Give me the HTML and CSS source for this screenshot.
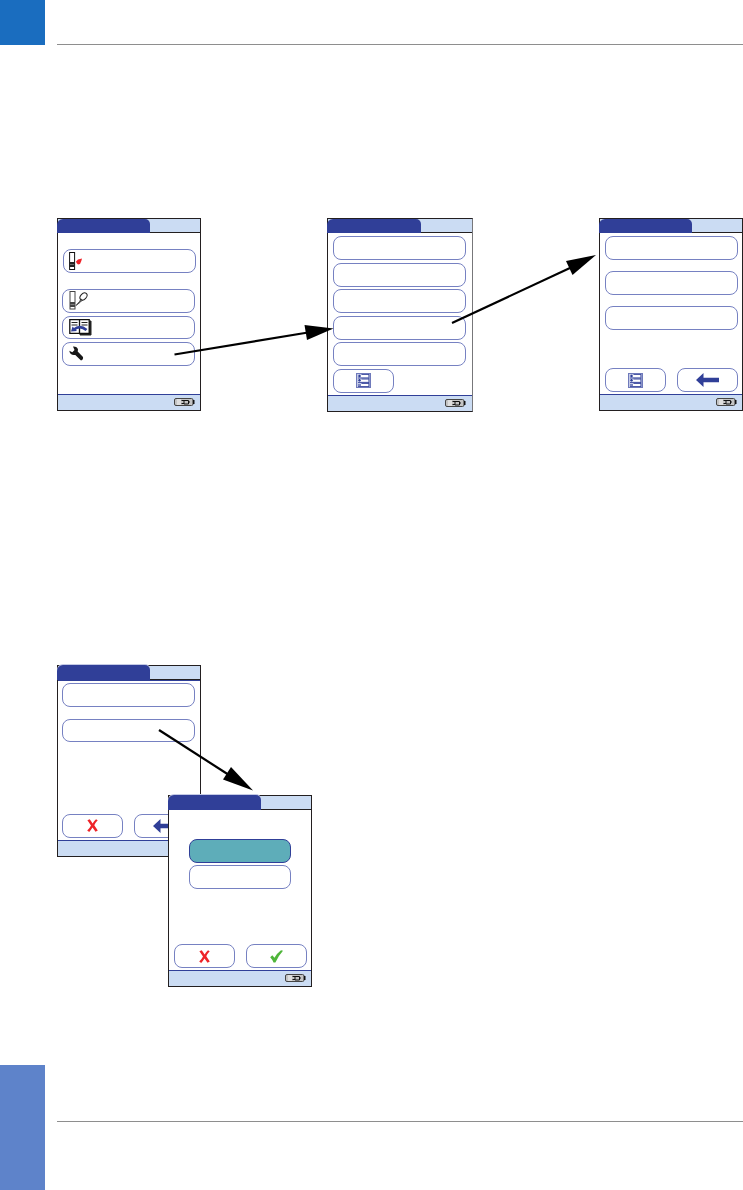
FILE: index.html
```html
<!DOCTYPE html>
<html lang="en">
<head>
<meta charset="utf-8">
<title>Menu overview</title>
<link rel="stylesheet" href="styles.css">
</head>
<body>
<svg class="defs" width="0" height="0" aria-hidden="true">
  <symbol id="battery" viewBox="0 0 21 8">
    <rect x=".5" y=".5" width="18.5" height="7" rx="1.5" fill="#c4c4c4" stroke="#444"/>
    <rect x="3" y="1" width="4" height="6" fill="#dedede"/>
    <path d="M19.7 2v4" stroke="#111" stroke-width="1.6"/>
    <path d="M7.500 2.500h7v3.500h-4.500v-3.500M7.500 5.500h2.500M14.500 4h1.500" fill="none" stroke="#111" stroke-width="1"/>
  </symbol>
  <symbol id="list" viewBox="0 0 15 15">
    <rect x=".5" y=".5" width="14" height="14" fill="#c4cae6" stroke="#6f7abb"/>
    <path d="M5 3h7M5 7.500h7M5 12h7" stroke="#fff" stroke-width="2"/>
    <path d="M2 5h11M2 9.500h11M2 13.500h11M5.500 1.500h7.500M5.500 6h7.500M5.500 10.500h7.500M13 1v13" fill="none" stroke="#303f98" stroke-width=".8"/>
    <path d="M2 3h3M3.500 1.700v2.500M2 7.300h3M3.500 6v2.500M2 12h3" stroke="#303f98" stroke-width="1.1"/>
  </symbol>
  <symbol id="back" viewBox="0 0 23 14">
    <path d="M0 7 7.500 0v4.800H23v4.400H7.500V14z" fill="#303f98"/>
  </symbol>
  <symbol id="cross" viewBox="0 0 11 13">
    <path d="M.4 1.200 2.700.3Q4.200 2 5.600 4.500 7 2 9 .3L10.700 1.300Q8.500 3.500 7.300 6.300L10.800 11.500 8.500 12.800Q7 10.500 5.500 8.500 4 11 2.200 12.900L.2 11.500Q2.800 9 4 6.400z" fill="#ee2429"/>
  </symbol>
  <symbol id="check" viewBox="0 0 13 13">
    <path d="M.2 7.200 2.300 5.200 4.500 7.800Q7 3.300 11 .3L13 .8Q8.300 6 5.400 12.500H3.500Q2.400 9.500.2 7.200z" fill="#4fb53a"/>
  </symbol>
</svg>

<div class="page">
  <header class="top"><div class="top-mark"></div><div class="rule"></div></header>

  <main>
    <section class="menus">
      <div class="device main-menu">
        <div class="bar"><div class="tab"></div></div>
        <div class="body">
          <div class="btn shifted">
            <svg width="13" height="18" viewBox="0 0 13 18"><rect x=".6" y=".5" width="5" height="17" fill="#fff" stroke="#111"/><path d="M.5 10h5.200v5H.5z" fill="#222"/><path d="M1 12.500h4" stroke="#888" stroke-width=".7"/><path d="M7 9.500 9 7.500 13 6.500 12.300 9 11 12 9 12.500 7.500 11z" fill="#ee2429"/></svg>
          </div>
          <div class="btn">
            <svg width="19" height="19" viewBox="0 0 19 19"><rect x="1" y=".5" width="5" height="17.500" fill="#fff" stroke="#444"/><path d="M1 11h5v5H1z" fill="#444"/><path d="M1.500 13.500h4" stroke="#999" stroke-width=".7"/><ellipse cx="14.500" cy="5.500" rx="4.100" ry="2.900" transform="rotate(-48 14.500 5.500)" fill="#fff" stroke="#222"/><path d="m12 8-1.500 2.500L7 14.500l4.500-3.500 2-2z" fill="#777" stroke="#222" stroke-width=".7"/></svg>
          </div>
          <div class="btn">
            <svg width="23" height="17" viewBox="0 0 23 17"><path d="M20.500 2H22v14H11v-2h9.500z" fill="#222" stroke="#222"/><path d="M.8.700h19.400v13.600H.8zM10.500 1v13" fill="#fff" stroke="#111" stroke-width="1.300"/><path d="M2.500 3.500h6M2.500 6h6M12.500 3.500h6M12.500 6h6" stroke="#222"/><path d="M5 10.500Q11 5.500 17.500 11" fill="none" stroke="#303f98" stroke-width="2.800"/><path d="m2 12.500 1.500-5 4.500 4.500z" fill="#303f98"/></svg>
          </div>
          <div class="btn">
            <svg width="15" height="15" viewBox="0 0 15 15"><path d="M4 .5Q8.300.3 9 3.500L8.700 5.500 14 11Q14.500 13.500 12 14.500L6.300 9Q1.200 9.800.3 4.800L3.300 6.200 5.500 4z" fill="#171717"/></svg>
          </div>
        </div>
        <div class="foot"><svg width="21" height="8"><use href="#battery"/></svg></div>
      </div>

      <div class="device review">
        <div class="bar"><div class="tab"></div></div>
        <div class="body">
          <div class="btn"></div><div class="btn"></div><div class="btn"></div><div class="btn"></div><div class="btn"></div>
          <div class="btn small"><svg width="15" height="15"><use href="#list"/></svg></div>
        </div>
        <div class="foot"><svg width="21" height="8"><use href="#battery"/></svg></div>
      </div>

      <div class="device setup">
        <div class="bar"><div class="tab"></div></div>
        <div class="body">
          <div class="btn"></div><div class="btn"></div><div class="btn"></div>
          <div class="pair">
            <div class="btn small"><svg width="15" height="15"><use href="#list"/></svg></div>
            <div class="btn small"><svg width="23" height="14"><use href="#back"/></svg></div>
          </div>
        </div>
        <div class="foot"><svg width="21" height="8"><use href="#battery"/></svg></div>
      </div>
    </section>

    <section class="dialogs">
      <div class="device options raised">
        <div class="bar"><div class="tab"></div></div>
        <div class="body">
          <div class="btn"></div><div class="btn"></div>
          <div class="pair">
            <div class="btn small"><svg width="11" height="13"><use href="#cross"/></svg></div>
            <div class="btn small"><svg width="23" height="14"><use href="#back"/></svg></div>
          </div>
        </div>
        <div class="foot"></div>
      </div>
      <div class="device choice raised">
        <div class="bar"><div class="tab"></div></div>
        <div class="body">
          <div class="btn selected"></div><div class="btn"></div>
          <div class="pair">
            <div class="btn small"><svg width="11" height="13"><use href="#cross"/></svg></div>
            <div class="btn small"><svg width="13" height="13"><use href="#check"/></svg></div>
          </div>
        </div>
        <div class="foot"><svg width="21" height="8"><use href="#battery"/></svg></div>
      </div>
    </section>
  </main>

  <footer class="bottom"><div class="bottom-mark"></div><div class="rule"></div></footer>

  <svg class="arrows" width="743" height="1190" viewBox="0 0 743 1190">
    <g stroke="#000" stroke-width="2.200">
      <path d="M174.500 354.500 308 332.500"/>
      <path d="M452 323 571 267.500"/>
      <path d="M159 730 229 775"/>
    </g>
    <path d="M333.500 328.500 304.500 325 307 340z"/>
    <path d="M596 255 566 261 572.500 275z"/>
    <path d="M253 790.500 231 767 223 779.500z"/>
  </svg>
</div>
</body>
</html>
```
FILE: styles.css
```css
* { box-sizing: border-box; }
body { margin: 0; background: #fff; font-family: "Liberation Sans", sans-serif; }
.defs { display: block; }
svg { display: block; flex: none; }

.page { position: relative; height: 1190px; display: flex; flex-direction: column; overflow: hidden; }
.top, .bottom { display: flex; gap: 12px; flex: none; }
.top { height: 45px; align-items: flex-end; }
.top-mark { width: 45px; height: 45px; background: #1a6dbf; }
.bottom { height: 125px; }
.bottom-mark { width: 45px; background: #5e83ca; }
.rule { flex: 1; height: 1px; background: #8e8e8e; }
.bottom .rule { margin-top: 56px; }
main { flex: 1; padding: 173px 0 0 57px; }

.menus { display: flex; justify-content: space-between; align-items: flex-start; height: 447px; }
.dialogs { display: flex; align-items: flex-start; }

.device { width: 144px; height: 193px; border: 1px solid #231f20; background: #fff; display: flex; flex-direction: column; flex: none; }
.bar { height: 14px; flex: none; background: #cbdcf3; border-bottom: 1px solid #231f20; }
.tab { width: 93px; height: 14px; margin-left: -1px; background: #303f98; border-radius: 6px 5px 0 0; }
.raised .tab { height: 15px; margin-top: -1px; box-shadow: 0 -1px 0 #c4cae5; }
.body { flex: 1; min-height: 0; padding: 3px 5px 0; display: flex; flex-direction: column; }
.btn { width: 133px; height: 24px; flex: none; border: 1px solid #7681c2; border-radius: 8px; display: flex; align-items: center; padding-left: 6px; }
.body .small { width: 61px; height: 24px; margin: 0; padding: 0; justify-content: center; }
.selected { background: #5eadb9; border-color: #303f98; }
.pair { display: flex; justify-content: space-between; width: 133px; }
.foot { height: 16px; flex: none; background: #cbdcf3; border-top: 1px solid #303f98; display: flex; justify-content: flex-end; padding: 3px 5px 0 0; }

.main-menu .body { padding-top: 16px; padding-left: 4px; }
.main-menu .btn { margin-bottom: 3px; height: 23.500px; }
.main-menu .shifted { margin-bottom: 16px; margin-left: 1px; padding-left: 5px; height: 24px; }

.review { width: 146px; height: 194px; margin-left: -1px; border-right-color: #77777a; }
.review .tab { width: 94px; }
.review .btn { margin-bottom: 2.600px; }
.review .foot { padding-right: 6px; }

.setup .btn { margin-bottom: 11px; }
.setup .pair { margin-top: 27px; }

.options { height: 192px; }
.options .bar { height: 15px; border-bottom-color: #303f98; box-shadow: inset 0 -1px 0 #231f20; }
.options .tab { height: 15px; }
.options .body { padding: 2px 4px 0; }
.options .btn { margin-bottom: 12px; height: 23.500px; }
.options .pair { margin-top: 60px; }

.choice { height: 192px; margin: 130px 0 0 -33px; z-index: 1; }
.choice .body { padding-top: 29px; }
.choice .body > .btn { width: 102px; margin: 0 0 2px 15px; }
.choice .pair { margin-top: 53px; }

.arrows { position: absolute; top: 0; left: 0; pointer-events: none; }
```
